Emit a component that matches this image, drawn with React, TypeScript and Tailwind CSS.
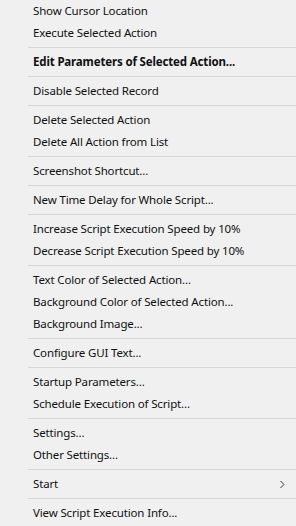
import { Fragment } from "react";

type Item = { label: string; bold?: boolean; submenu?: boolean };

const groups: Item[][] = [
  [{ label: "Show Cursor Location" }, { label: "Execute Selected Action" }],
  [{ label: "Edit Parameters of Selected Action...", bold: true }],
  [{ label: "Disable Selected Record" }],
  [{ label: "Delete Selected Action" }, { label: "Delete All Action from List" }],
  [{ label: "Screenshot Shortcut..." }],
  [{ label: "New Time Delay for Whole Script..." }],
  [
    { label: "Increase Script Execution Speed by 10%" },
    { label: "Decrease Script Execution Speed by 10%" },
  ],
  [
    { label: "Text Color of Selected Action..." },
    { label: "Background Color of Selected Action..." },
    { label: "Background Image..." },
  ],
  [{ label: "Configure GUI Text..." }],
  [{ label: "Startup Parameters..." }, { label: "Schedule Execution of Script..." }],
  [{ label: "Settings..." }, { label: "Other Settings..." }],
  [{ label: "Start", submenu: true }],
  [{ label: "View Script Execution Info..." }],
];

function MenuItem({ item }: { item: Item }) {
  return (
    <div className="flex h-[22px] items-center pl-[33px] pr-[11px]">
      <span className={`flex-1 whitespace-nowrap ${item.bold ? "font-bold" : ""}`}>
        {item.label}
      </span>
      {item.submenu && (
        <svg width="5" height="9" viewBox="0 0 5 9">
          <path d="M0.5 1 L4 4.5 L0.5 8" fill="none" stroke="#333" strokeWidth="1" />
        </svg>
      )}
    </div>
  );
}

export default function App() {
  return (
    <div className="h-[526px] w-[296px] overflow-hidden bg-[#f0f0f0] font-['Noto_Sans',sans-serif] text-[11.5px] tracking-[-0.15px] text-[#111]">
      {groups.map((group, i) => (
        <Fragment key={i}>
          {i > 0 && (
            <div className="flex h-[7px] items-center pl-[28px]">
              <div className="h-px flex-1 bg-[#d7d7d7]" />
            </div>
          )}
          {group.map((item) => (
            <MenuItem key={item.label} item={item} />
          ))}
        </Fragment>
      ))}
    </div>
  );
}
